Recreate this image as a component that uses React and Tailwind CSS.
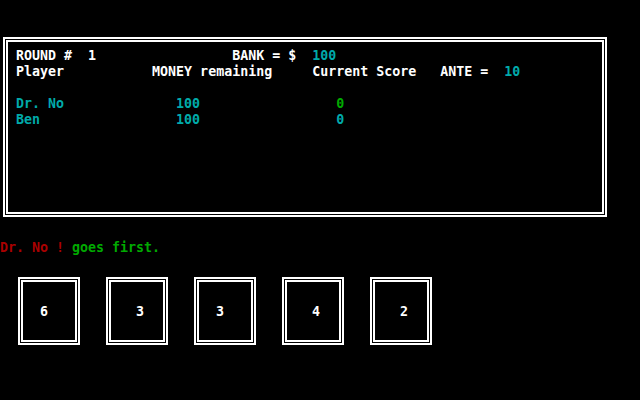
import React from 'react';

// DOS-style 80x25 text screen: every character cell is 8x16 px
const CYAN = 'text-[#00aaaa]';
const GREEN = 'text-[#00aa00]';
const RED = 'text-[#aa0000]';

const cards = [
    { value: 6, pad: 'pl-[17px]' },
    { value: 3, pad: 'pl-[25px]' },
    { value: 3, pad: 'pl-[17px]' },
    { value: 4, pad: 'pl-[25px]' },
    { value: 2, pad: 'pl-[25px]' },
];

const Line = ({ children }) => <div className="h-4 whitespace-pre">{children}</div>;

function App() {
    return (
        <div className="w-[640px] h-[400px] bg-black overflow-hidden text-white font-bold font-['DejaVu_Sans_Mono','Liberation_Mono',monospace] text-[13.3px] leading-4">
            {/* Score board */}
            <div className="pt-[37px] pl-[3px]">
                <div className="w-[604px] h-[180px] border-2 border-white p-px">
                    <div className="h-full border-2 border-white pl-[8px] pt-[6px]">
                        <Line>
                            {'ROUND #  1                 BANK = $  '}
                            <span className={CYAN}>100</span>
                        </Line>
                        <Line>
                            {'Player           MONEY remaining     Current Score   ANTE =  '}
                            <span className={CYAN}>10</span>
                        </Line>
                        <Line> </Line>
                        <Line>
                            <span className={CYAN}>{'Dr. No              100                 '}</span>
                            <span className={GREEN}>0</span>
                        </Line>
                        <Line>
                            <span className={CYAN}>{'Ben                 100                 0'}</span>
                        </Line>
                    </div>
                </div>
            </div>

            {/* Turn message */}
            <div className="mt-[23px] h-4 whitespace-pre">
                <span className={RED}>Dr. No !</span>
                <span className={GREEN}> goes first.</span>
            </div>

            {/* Dice cards */}
            <div className="mt-[21px] pl-[18px] flex gap-[26px]">
                {cards.map((c, i) => (
                    <div key={i} className="w-[62px] h-[68px] border-2 border-white p-px">
                        <div className={`h-full border-2 border-white pt-[22px] ${c.pad}`}>
                            <Line>{c.value}</Line>
                        </div>
                    </div>
                ))}
            </div>
        </div>
    );
}

export default App;
